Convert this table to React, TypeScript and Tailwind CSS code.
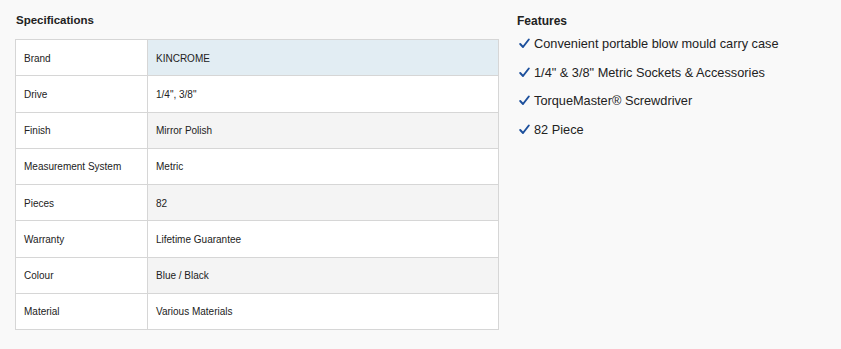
import type { FC } from "react";

const specs: [string, string][] = [
  ["Brand", "KINCROME"],
  ["Drive", "1/4\", 3/8\""],
  ["Finish", "Mirror Polish"],
  ["Measurement System", "Metric"],
  ["Pieces", "82"],
  ["Warranty", "Lifetime Guarantee"],
  ["Colour", "Blue / Black"],
  ["Material", "Various Materials"],
];

const features = [
  "Convenient portable blow mould carry case",
  "1/4\" & 3/8\" Metric Sockets & Accessories",
  "TorqueMaster® Screwdriver",
  "82 Piece",
];

const Check: FC = () => (
  <svg width="11" height="11" viewBox="0 0 11 11" className="shrink-0">
    <path d="M1.2 6 L4 9 L9.8 1.5" fill="none" stroke="#1c4f9c" strokeWidth="1.9" strokeLinecap="round" strokeLinejoin="round" />
  </svg>
);

export default function App() {
  return (
    <div className="w-[841px] h-[349px] bg-[#f9f9f9] text-[#222] font-['Liberation_Sans',Arial,sans-serif] flex gap-[17px] px-[15px] pt-[12px]">
      <section className="w-[484px] shrink-0">
        <h2 className="font-bold text-[11.5px] h-[17px] leading-[17px] pl-px mb-[10px]">Specifications</h2>
        <table className="w-full border-collapse border border-[#d6d6d6] text-[10px]">
          <tbody>
            {specs.map(([label, value], i) => (
              <tr key={label} className="h-[36.25px]">
                <td className="w-[132px] bg-white border border-[#d6d6d6] pl-[8px] pt-px">{label}</td>
                <td
                  className={
                    "border border-[#d6d6d6] pl-[8px] pt-px " +
                    (i === 0 ? "bg-[#e2edf3]" : i % 2 === 0 ? "bg-[#f4f4f4]" : "bg-white")
                  }
                >
                  {value}
                </td>
              </tr>
            ))}
          </tbody>
        </table>
      </section>
      <section className="pl-[1px]">
        <h2 className="font-bold text-[12px] h-[17px] leading-[17px] pt-px">Features</h2>
        <ul className="flex flex-col text-[12.75px] text-[#222]">
          {features.map((f) => (
            <li key={f} className="flex items-center gap-[4px] h-[28.5px] pl-[2px] pt-px">
              <Check />
              <span>{f}</span>
            </li>
          ))}
        </ul>
      </section>
    </div>
  );
}
